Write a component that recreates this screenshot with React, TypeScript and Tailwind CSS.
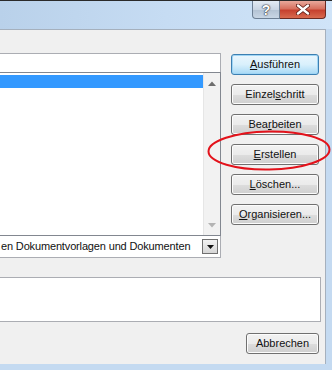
import React from 'react';

const font = { fontFamily: '"Liberation Sans", Arial, sans-serif' };

function DlgButton({ children, isDefault = false }: { children: React.ReactNode; isDefault?: boolean }) {
  return (
    <div
      className={
        'flex h-[21px] w-[88px] items-center justify-center rounded-[3px] border text-[11px] leading-none text-[#111] ' +
        (isDefault
          ? 'border-[#3c7fb1] bg-gradient-to-b from-[#eaf6fd] via-[#d9f0fc] to-[#a7d9f5] shadow-[inset_0_0_0_1px_#9fd5f5]'
          : 'border-[#707070] bg-[linear-gradient(#f2f2f2_0%,#ebebeb_50%,#dddddd_51%,#cfcfcf_100%)] shadow-[inset_0_0_0_1px_#fcfcfc]')
      }
    >
      <span className="pb-px">{children}</span>
    </div>
  );
}

export default function App() {
  return (
    <div
      className="relative flex h-[370px] w-[332px] flex-col overflow-hidden bg-[#c4daf1]"
      style={font}
    >
      {/* title bar */}
      <div className="flex h-[29px] w-full shrink-0 items-start justify-end border-t border-[#2a2a2a] bg-gradient-to-r from-[#b9d1ea] via-[#c6dcf3] to-[#d0e4f8] pr-[6px]">
        <div className="flex h-[18px] w-[28px] items-center justify-center rounded-bl-[4px] border border-t-0 border-[#6d7f94] bg-[linear-gradient(#e3ebf4_0%,#c9d5e3_50%,#b3c2d3_51%,#c8d6e5_100%)]">
          <span
            className="text-[14px] font-bold leading-none text-white"
            style={{ textShadow: '0 0 1px #333, 0 0 1px #333, 0 0 2px #445' }}
          >
            ?
          </span>
        </div>
        <div className="flex h-[18px] w-[46px] items-center justify-center rounded-br-[4px] border border-l-0 border-t-0 border-[#6b2a22] bg-[linear-gradient(#e9a99c_0%,#d7715f_45%,#c6412f_55%,#d86a4f_100%)]">
          <svg width="14" height="11" viewBox="0 0 14 11">
            <path d="M2 1.5 L12 9.5 M12 1.5 L2 9.5" stroke="#5a1a12" strokeWidth="4" strokeLinecap="round" />
            <path d="M2 1.5 L12 9.5 M12 1.5 L2 9.5" stroke="#ffffff" strokeWidth="2.4" strokeLinecap="round" />
          </svg>
        </div>
      </div>

      {/* client */}
      <div className="flex h-[335px] w-[326px] shrink-0 flex-col border-r border-t border-[#a5b0bd] bg-[#f0f0f0] pt-[23px]">
        <div className="flex">
          <div className="flex w-[221px] flex-col">
            <div className="h-[19px] border border-b-0 border-l-0 border-[#abadb3] bg-white" />
            <div className="flex h-[164px] border border-l-0 border-[#828790] bg-white">
              <div className="flex-1 pt-[2px]">
                <div className="h-[13px] bg-[#3399ff]" />
              </div>
              <div className="flex w-[17px] flex-col items-center justify-between border-l border-[#e6e6e6] bg-[#f2f2f2] pb-[7px] pt-[8px]">
                <svg width="8" height="5" viewBox="0 0 8 5">
                  <path d="M0 5 L4 0.5 L8 5 Z" fill="#6e6e6e" />
                </svg>
                <svg width="8" height="5" viewBox="0 0 8 5">
                  <path d="M0 0 L4 4.5 L8 0 Z" fill="#b4b4b4" />
                </svg>
              </div>
            </div>
            <div className="flex h-[22px] items-center border border-l-0 border-t-0 border-[#abadb3] bg-white">
              <span className="min-w-0 flex-1 overflow-hidden whitespace-nowrap pl-px text-[11px] leading-none tracking-[-0.15px] text-[#111]">
                en Dokumentvorlagen und Dokumenten
              </span>
              <div className="mr-[2px] flex h-[15px] w-[16px] shrink-0 items-center justify-center border border-[#707070] bg-[linear-gradient(#f2f2f2,#d6d6d6)]">
                <svg width="7" height="4" viewBox="0 0 7 4">
                  <path d="M0 0 L3.5 4 L7 0 Z" fill="#111" />
                </svg>
              </div>
            </div>
          </div>

          <div className="ml-[10px] mt-px flex flex-col gap-[9px]">
            <DlgButton isDefault>
              <u>A</u>usführen
            </DlgButton>
            <DlgButton>
              Einzel<u>s</u>chritt
            </DlgButton>
            <DlgButton>
              Bea<u>r</u>beiten
            </DlgButton>
            <DlgButton>
              <u>E</u>rstellen
            </DlgButton>
            <DlgButton>
              <u>L</u>öschen...
            </DlgButton>
            <DlgButton>
              <u>O</u>rganisieren...
            </DlgButton>
          </div>
        </div>

        <div className="mt-[19px] h-[45px] w-[321px] border border-l-0 border-[#abadb3] bg-white" />

        <div className="mt-[11px] flex w-[319px] justify-end">
          <div className="flex h-[21px] w-[73px] items-center justify-center rounded-[3px] border border-[#707070] bg-[linear-gradient(#f2f2f2_0%,#ebebeb_50%,#dddddd_51%,#cfcfcf_100%)] text-[11px] leading-none text-[#111] shadow-[inset_0_0_0_1px_#fcfcfc]">
            <span className="pb-px">Abbrechen</span>
          </div>
        </div>
      </div>

      {/* red annotation */}
      <svg className="pointer-events-none absolute left-0 top-0" width="332" height="370">
        <ellipse cx="269" cy="150.5" rx="60.5" ry="19" fill="none" stroke="#e3121b" strokeWidth="2" transform="rotate(-1 269 150.5)" />
      </svg>
    </div>
  );
}
